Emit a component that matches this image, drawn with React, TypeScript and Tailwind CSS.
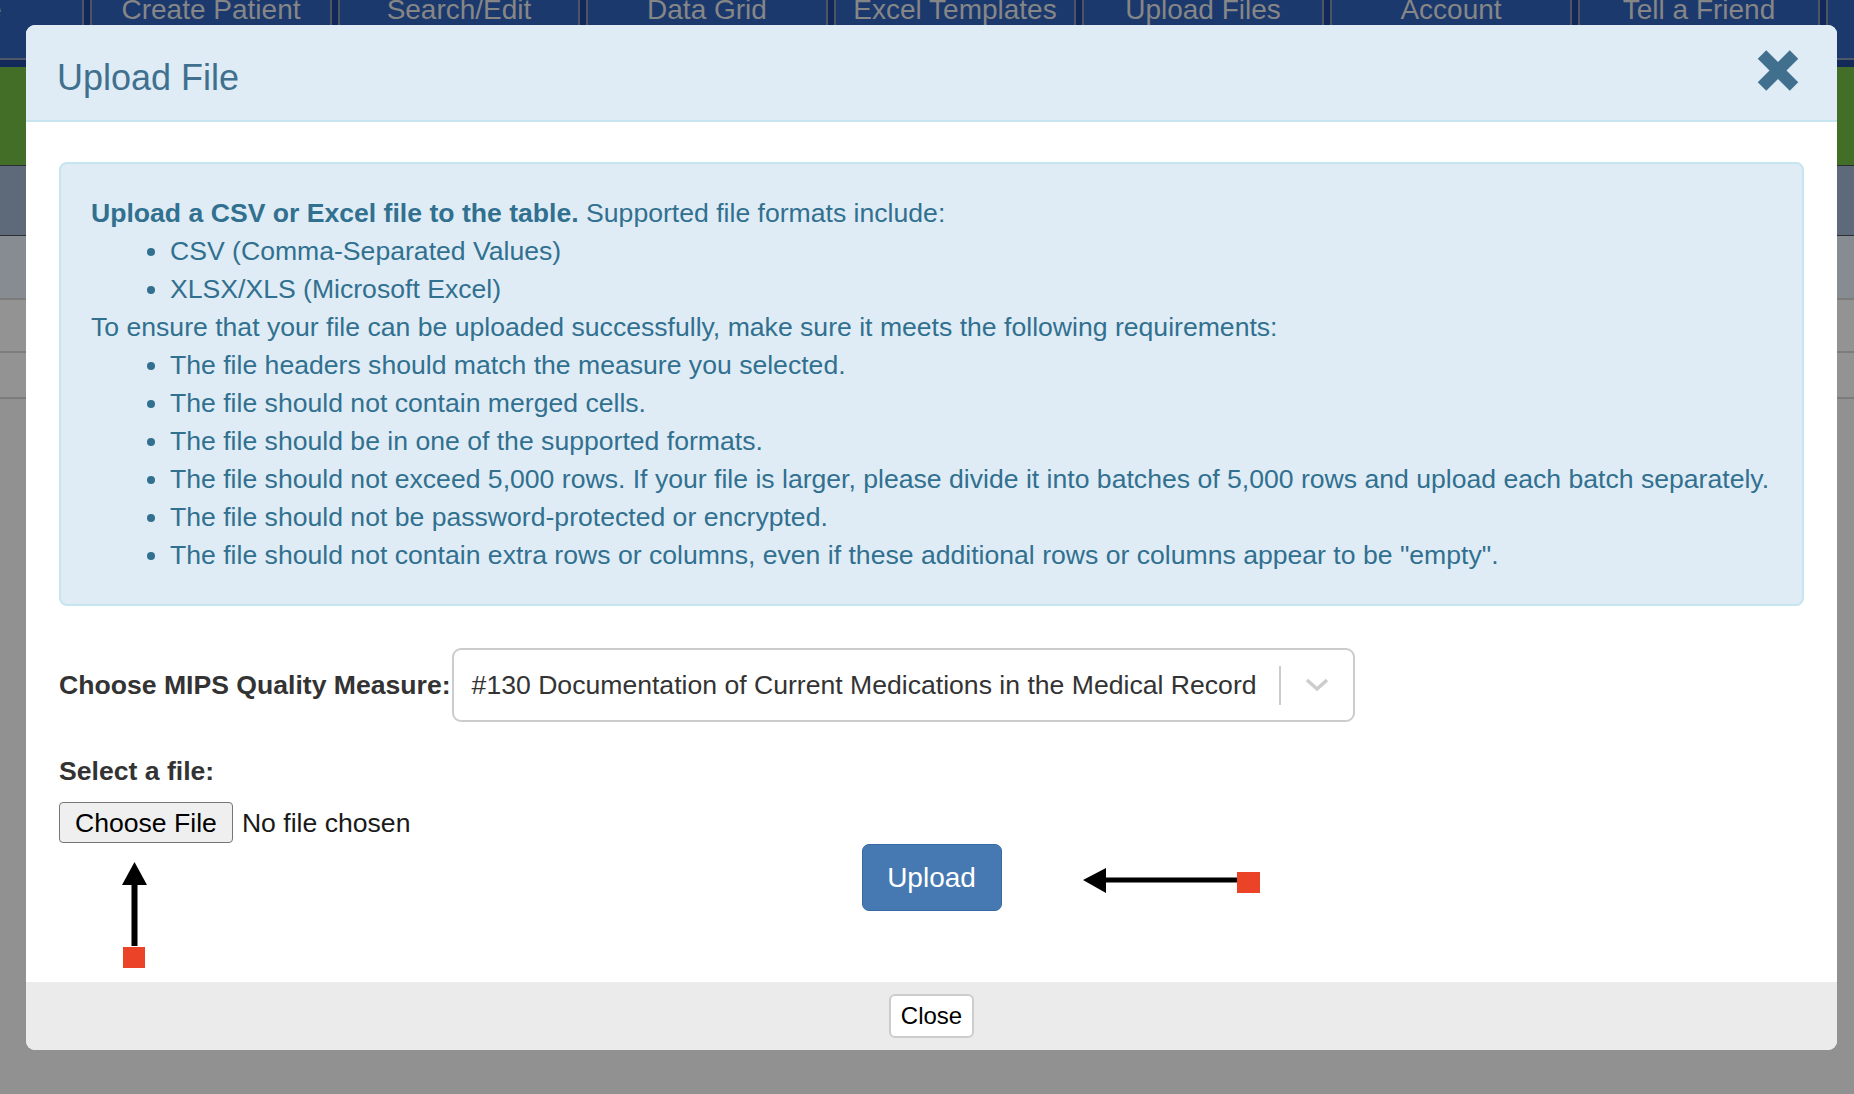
import React from 'react';

const NAV_TABS = [
  'Create Patient',
  'Search/Edit',
  'Data Grid',
  'Excel Templates',
  'Upload Files',
  'Account',
  'Tell a Friend',
  '',
];

const FORMATS = ['CSV (Comma-Separated Values)', 'XLSX/XLS (Microsoft Excel)'];

const REQUIREMENTS = [
  'The file headers should match the measure you selected.',
  'The file should not contain merged cells.',
  'The file should be in one of the supported formats.',
  'The file should not exceed 5,000 rows. If your file is larger, please divide it into batches of 5,000 rows and upload each batch separately.',
  'The file should not be password-protected or encrypted.',
  'The file should not contain extra rows or columns, even if these additional rows or columns appear to be "empty".',
];

function CloseIcon() {
  return (
    <svg width="44" height="45" viewBox="0 0 44 44" className="block">
      <g stroke="#41708f" strokeWidth="12" strokeLinecap="butt">
        <line x1="6" y1="6" x2="38" y2="38" />
        <line x1="38" y1="6" x2="6" y2="38" />
      </g>
    </svg>
  );
}

function Chevron() {
  return (
    <svg width="24" height="14" viewBox="0 0 24 14" className="block">
      <polyline points="2,2 12,11 22,2" fill="none" stroke="#cccccc" strokeWidth="3.5" />
    </svg>
  );
}

function BackgroundPage() {
  return (
    <div className="flex flex-col">
      <div className="flex h-[58px] bg-[#1c396d] overflow-hidden">
        <div className="w-[82px] shrink-0 overflow-hidden">
          <span className="ml-[-12px] block text-[24px] leading-[20px] font-bold text-[#4f9a2c]">e</span>
        </div>
        {NAV_TABS.map((tab, i) => (
          <div key={i} className="flex shrink-0">
            <div className="w-[10px] border-x-2 border-[#4d5565] bg-[#10275a]" />
            <div className="w-[238px] text-center text-[28px] leading-[20px] text-[#868686] whitespace-nowrap">
              {tab}
            </div>
          </div>
        ))}
      </div>
      <div className="h-[2px] bg-[#4f5868]" />
      <div className="h-[7px] bg-[#12295a]" />
      <div className="h-[98px] bg-[#436e28]" />
      <div className="h-[1px] bg-[#2b2f35]" />
      <div className="h-[69px] bg-[#5e6979]" />
      <div className="h-[1px] bg-[#2b2f35]" />
      <div className="h-[62px] bg-[#878c93]" />
      <div className="h-[2px] bg-[#7c7c7c]" />
      <div className="h-[51px] bg-[#939393]" />
      <div className="h-[2px] bg-[#7c7c7c]" />
      <div className="h-[44px] bg-[#939393]" />
      <div className="h-[2px] bg-[#7c7c7c]" />
    </div>
  );
}

export default function App() {
  return (
    <div className="relative h-[1094px] w-full overflow-hidden bg-[#919191] font-['Liberation_Sans',Arial,sans-serif]">
      <BackgroundPage />

      {/* modal */}
      <div className="absolute left-[26px] top-[25px] w-[1811px] overflow-hidden rounded-[9px] bg-white">
        <div className="flex h-[97px] items-start justify-between border-b-2 border-[#c6e5ef] bg-[#dfecf6] pl-[31px] pr-[37px]">
          <h4 className="mt-[33px] text-[36px] leading-[40px] text-[#41708f]">Upload File</h4>
          <button className="mt-[23px]">
            <CloseIcon />
          </button>
        </div>

        <div className="flex flex-col px-[33px] pt-[40px] pb-[71px] text-[26.6px] leading-[38px]">
          <div className="rounded-[8px] border-2 border-[#c6e6ef] bg-[#dfecf6] px-[30px] py-[30px] text-[#31708f]">
            <div>
              <strong>Upload a CSV or Excel file to the table.</strong> Supported file formats include:
            </div>
            <ul className="list-disc pl-[79px]">
              {FORMATS.map((f) => (
                <li key={f}>{f}</li>
              ))}
            </ul>
            <div>
              To ensure that your file can be uploaded successfully, make sure it meets the following
              requirements:
            </div>
            <ul className="list-disc pl-[79px]">
              {REQUIREMENTS.map((r) => (
                <li key={r}>{r}</li>
              ))}
            </ul>
          </div>

          <div className="mt-[42px] flex items-center">
            <label className="mr-[1px] font-bold text-[#333333]">Choose MIPS Quality Measure:</label>
            <div className="flex h-[74px] w-[903px] items-center rounded-[9px] border-2 border-[#cccccc] pl-[18px]">
              <span className="flex-1 text-[#333333] whitespace-nowrap">
                #130 Documentation of Current Medications in the Medical Record
              </span>
              <div className="h-[39px] w-[2px] bg-[#cccccc]" />
              <div className="flex w-[72px] justify-center">
                <Chevron />
              </div>
            </div>
          </div>

          <label className="mt-[30px] font-bold text-[#333333]">Select a file:</label>

          <div className="mt-[12px] flex items-center">
            <button className="h-[41px] rounded-[4px] border border-[#767676] bg-[#efefef] px-[15px] text-[26.6px] leading-[38px] text-black">
              Choose File
            </button>
            <span className="ml-[9px] text-[#1a1a1a]">No file chosen</span>
          </div>

          <div className="mt-[1px] flex justify-center">
            <button className="h-[67px] w-[140px] rounded-[7px] border border-[#3a6aa3] bg-[#4678b2] text-[28px] text-white">
              Upload
            </button>
          </div>
        </div>

        <div className="flex justify-center bg-[#ebebeb] py-[12px]">
          <button className="h-[44px] w-[85px] rounded-[6px] border-2 border-[#cccccc] bg-white text-[24px] text-black">
            Close
          </button>
        </div>
      </div>

      {/* annotation arrows */}
      <svg className="absolute left-[121px] top-[861px]" width="27" height="108" viewBox="0 0 27 108">
        <polygon points="13.5,1 1,24 26,24" fill="#000" />
        <rect x="10.5" y="22" width="6" height="63" fill="#000" />
        <rect x="2" y="86" width="22" height="21" fill="#ea4328" />
      </svg>
      <svg className="absolute left-[1082px] top-[867px]" width="180" height="27" viewBox="0 0 180 27">
        <polygon points="1,13 24,1 24,26" fill="#000" />
        <rect x="22" y="10.5" width="133" height="5" fill="#000" />
        <rect x="155" y="5" width="23" height="21" fill="#ea4328" />
      </svg>
    </div>
  );
}
